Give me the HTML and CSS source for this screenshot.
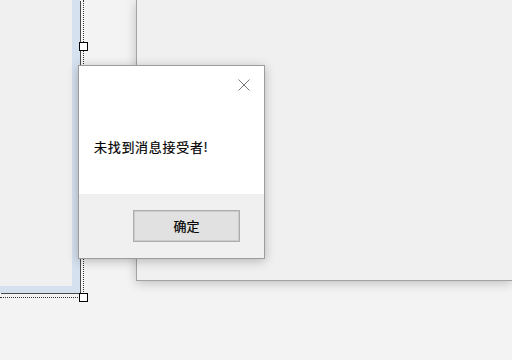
FILE: index.html
```html
<!DOCTYPE html>
<html>
<head>
<meta charset="utf-8">
<link rel="stylesheet" href="styles.css">
</head>
<body>
<div class="desktop">
  <div class="form"></div>
  <div class="selection"></div>
  <div class="handle handle-top"></div>
  <div class="handle handle-bottom"></div>
  <div class="backwin"></div>
  <div class="dialog">
    <div class="dialog-body">
      <div class="close-row">
        <svg class="close" width="12" height="12" viewBox="0 0 12 12">
          <path d="M0.5 0.5 L11.5 11.5 M11.5 0.5 L0.5 11.5" stroke="#7a7a7a" stroke-width="1" fill="none"/>
        </svg>
      </div>
      <div class="message">未找到消息接受者!</div>
    </div>
    <div class="dialog-footer">
      <button class="btn">确定</button>
    </div>
  </div>
</div>
</body>
</html>
```

FILE: styles.css
```css
html, body {
  margin: 0;
  padding: 0;
}
body {
  width: 512px;
  height: 360px;
  overflow: hidden;
  background: #f3f3f3;
  font-family: "Noto Sans CJK SC", "Noto Sans", sans-serif;
}
.desktop {
  position: relative;
  width: 512px;
  height: 360px;
  overflow: hidden;
}
.form {
  position: absolute;
  left: 0;
  top: 0;
  width: 72px;
  height: 286px;
  background: #f0f0f0;
  border-right: 8px solid #d6e1ef;
  border-bottom: 7px solid #d6e1ef;
  box-shadow: 1px 1px 0 #4a4a4a;
}
.selection {
  position: absolute;
  left: 0;
  top: 0;
  width: 83px;
  height: 297px;
  border-right: 1px dotted #333;
  border-bottom: 1px dotted #333;
}
.handle {
  position: absolute;
  left: 79px;
  width: 7px;
  height: 7px;
  background: #fff;
  border: 1px solid #000;
}
.handle-top { top: 42px; }
.handle-bottom { top: 293px; }
.backwin {
  position: absolute;
  left: 136px;
  top: 0;
  width: 375px;
  height: 280px;
  background: #f0f0f0;
  border-left: 1px solid #a3a3a3;
  border-bottom: 1px solid #a3a3a3;
  box-shadow: 0 2px 10px rgba(0, 0, 0, 0.22);
}
.dialog {
  position: absolute;
  left: 78px;
  top: 65px;
  width: 187px;
  height: 194px;
  box-sizing: border-box;
  border: 1px solid #9c9c9c;
  background: #f0f0f0;
  box-shadow: 0 2px 10px rgba(0, 0, 0, 0.25);
  display: flex;
  flex-direction: column;
}
.dialog-body {
  height: 128px;
  background: #fff;
  display: flex;
  flex-direction: column;
}
.close-row {
  display: flex;
  justify-content: flex-end;
  padding: 13px 14px 0 0;
  height: 12px;
}
.close {
  display: block;
}
.message {
  margin-top: 49px;
  padding-left: 15px;
  font-size: 13px;
  line-height: 14px;
  color: #000;
  letter-spacing: 0.7px;
  -webkit-text-stroke: 0.2px #000;
}
.dialog-footer {
  flex: 1;
  display: flex;
  justify-content: flex-end;
  align-items: flex-start;
  padding: 16px 24px 0 0;
}
.btn {
  width: 107px;
  height: 32px;
  margin: 0;
  padding: 0;
  box-sizing: border-box;
  background: #e1e1e1;
  border: 1px solid #adadad;
  box-shadow: inset 0 0 0 1px #cbcbcb;
  font-family: "Noto Sans CJK SC", "Noto Sans", sans-serif;
  font-size: 13px;
  color: #000;
  line-height: 14px;
  -webkit-text-stroke: 0.2px #000;
}
```
